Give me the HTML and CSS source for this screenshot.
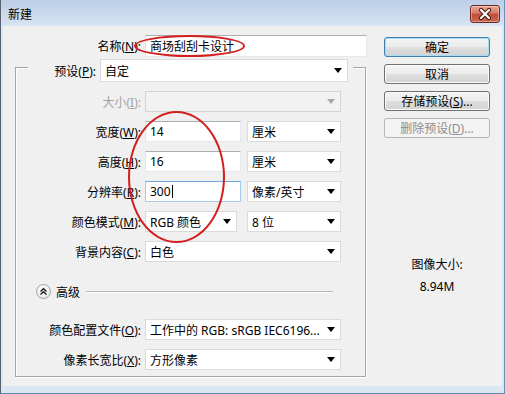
FILE: index.html
```html
<!DOCTYPE html>
<html lang="zh-CN">
<head>
  <meta charset="UTF-8" />
  <title>新建</title>
  <link rel="stylesheet" href="styles.css">
</head>
<body>

  <div class="window">
    <div class="titlebar">
      <span class="title">新建</span>
      <button class="close">
        <svg width="28" height="16" viewBox="0 0 28 16">
          <path d="M10 4 L18 12 M18 4 L10 12" stroke="#4a1810" stroke-width="4.2" stroke-linecap="round" fill="none"/>
          <path d="M10 4 L18 12 M18 4 L10 12" stroke="#ffffff" stroke-width="2.2" stroke-linecap="round" fill="none"/>
        </svg>
      </button>
    </div>

    <div class="client">
      <div class="main">
        <div class="name-row">
          <label class="lbl">名称(<u>N</u>):</label>
          <div class="field text">商场刮刮卡设计</div>
        </div>

        <div class="group">
          <div class="preset-row">
            <label class="lbl">预设(<u>P</u>):</label>
            <div class="field select">自定</div>
          </div>

          <div class="grow">
            <label class="lbl disabled">大小(<u>I</u>):</label>
            <div class="field select off"></div>
          </div>

          <div class="grow">
            <label class="lbl">宽度(<u>W</u>):</label>
            <div class="pair">
              <div class="field text num">14</div>
              <div class="field select unit">厘米</div>
            </div>
          </div>

          <div class="grow">
            <label class="lbl">高度(<u>H</u>):</label>
            <div class="pair">
              <div class="field text num">16</div>
              <div class="field select unit">厘米</div>
            </div>
          </div>

          <div class="grow">
            <label class="lbl">分辨率(<u>R</u>):</label>
            <div class="pair">
              <div class="field text num focus">300<span class="caret"></span></div>
              <div class="field select unit">像素/英寸</div>
            </div>
          </div>

          <div class="grow">
            <label class="lbl">颜色模式(<u>M</u>):</label>
            <div class="pair wide-gap">
              <div class="field select mode">RGB 颜色</div>
              <div class="field select unit">8 位</div>
            </div>
          </div>

          <div class="grow">
            <label class="lbl">背景内容(<u>C</u>):</label>
            <div class="field select">白色</div>
          </div>

          <div class="adv">
            <span class="expand">
              <svg width="15" height="15" viewBox="0 0 15 15">
                <path d="M4.5 7.5 L7.5 4.8 L10.5 7.5 M4.5 10.5 L7.5 7.8 L10.5 10.5" stroke="#1a1a1a" stroke-width="1.4" fill="none"/>
              </svg>
            </span>
            <span>高级</span>
            <span class="sep"></span>
          </div>

          <div class="grow profile">
            <label class="lbl">颜色配置文件(<u>O</u>):</label>
            <div class="field select">工作中的 RGB: sRGB IEC6196...</div>
          </div>

          <div class="grow">
            <label class="lbl">像素长宽比(<u>X</u>):</label>
            <div class="field select">方形像素</div>
          </div>
        </div>
      </div>

      <div class="side">
        <button class="btn default">确定</button>
        <button class="btn">取消</button>
        <button class="btn">存储预设(<u>S</u>)...</button>
        <button class="btn" disabled>删除预设(<u>D</u>)...</button>

        <div class="info">
          <p>图像大小:</p>
          <p class="size">8.94M</p>
        </div>
      </div>
    </div>

    <div class="mark mark-name"></div>
    <div class="mark mark-size"></div>
  </div>

</body>
</html>
```

FILE: styles.css
```css
body {
  margin: 0;
  font-family: "Noto Sans", "Noto Sans CJK SC", sans-serif;
  font-size: 12px;
  color: #000000;
}

.window {
  position: relative;
  width: 505px;
  height: 394px;
  box-sizing: border-box;
  background-color: #dce7f4;
  border-left: 1px solid #58626e;
  border-right: 1px solid #6d90b8;
  border-bottom: 1px solid #5f86b3;
  display: flex;
  flex-direction: column;
}

.titlebar {
  height: 26px;
  box-sizing: border-box;
  padding: 2px 4px 0 7px;
  display: flex;
  align-items: center;
  justify-content: space-between;
  background: linear-gradient(#bccfe7, #d7e4f3);
}

.close {
  width: 30px;
  height: 18px;
  padding: 0;
  border: 1px solid #6e2a20;
  border-radius: 3px;
  background: linear-gradient(#e9a898 0%, #d67a66 45%, #c04e3a 50%, #cc6450 100%);
  box-shadow: inset 0 0 0 1px rgba(255,255,255,0.35);
  display: flex;
  align-items: center;
  justify-content: center;
}

.client {
  margin: 0 2px;
  height: 360px;
  background-color: #f0f0f0;
  display: flex;
}

.main {
  width: 370px;
}

.lbl {
  text-align: right;
  white-space: nowrap;
}

.lbl.disabled {
  color: #a3a3a3;
}

.name-row {
  display: grid;
  grid-template-columns: 138px 222px;
  column-gap: 4px;
  align-items: center;
  height: 22px;
  margin-top: 9px;
}

.field {
  height: 100%;
  box-sizing: border-box;
  border: 1px solid #dadada;
  background-color: #ffffff;
  padding-left: 4px;
  display: flex;
  align-items: center;
  white-space: nowrap;
  overflow: hidden;
}

.field.text {
  border-color: #abadb3 #e3e9ef #e3e9ef #e2e3ea;
}

.field.focus {
  border-color: #6fa7dc #a7cbec #a7cbec #a7cbec;
}

.caret {
  display: inline-block;
  width: 1px;
  height: 13px;
  margin-left: 1px;
  background-color: #000000;
}

.field.select::after {
  content: "";
  margin-left: auto;
  margin-right: 5px;
  border-left: 4px solid transparent;
  border-right: 4px solid transparent;
  border-top: 5px solid #000000;
}

.field.select.off {
  background-color: #f2f2f2;
  border-color: #d4d4d4;
}

.field.select.off::after {
  border-top-color: #a8a8a8;
}

.group {
  width: 351px;
  box-sizing: border-box;
  margin: 10px 0 0 12px;
  padding-bottom: 6px;
  border: 1px solid #a5a5a5;
  box-shadow: inset 1px 1px 0 #ffffff, 1px 1px 0 #ffffff;
}

.preset-row {
  display: grid;
  grid-template-columns: 68px 248px;
  column-gap: 4px;
  align-items: center;
  height: 23px;
  margin: -9px 12px 0;
  background-color: #f0f0f0;
}

.grow {
  display: grid;
  grid-template-columns: 125px 196px;
  column-gap: 4px;
  align-items: center;
  height: 21px;
  margin-top: 9px;
}

.grow.profile {
  margin-top: 19px;
}

.pair {
  display: flex;
  gap: 6px;
  height: 100%;
}

.pair.wide-gap {
  gap: 10px;
}

.num {
  width: 96px;
}

.mode {
  width: 92px;
}

.unit {
  width: 94px;
}

.adv {
  display: flex;
  align-items: center;
  gap: 5px;
  height: 17px;
  margin: 21px 32px 0 0;
  padding-left: 20px;
}

.expand {
  width: 15px;
  height: 15px;
  box-sizing: border-box;
  border: 1px solid #a2a2a2;
  border-radius: 50%;
  background: radial-gradient(circle at 40% 35%, #ffffff, #e2e2e2);
  display: flex;
  align-items: center;
  justify-content: center;
}

.expand svg {
  margin: -1px;
}

.sep {
  flex: 1;
  margin-left: 1px;
  border-top: 1px solid #b8b8b8;
  border-bottom: 1px solid #ffffff;
}

.side {
  margin-left: 11px;
  padding-top: 11px;
  width: 106px;
  display: flex;
  flex-direction: column;
}

.btn {
  width: 106px;
  height: 20px;
  margin-bottom: 7px;
  padding: 0;
  font-family: inherit;
  font-size: 12px;
  color: #000000;
  border: 1px solid #707070;
  border-radius: 3px;
  background: linear-gradient(#f4f4f4 0%, #ececec 50%, #dfdfdf 51%, #d3d3d3 100%);
  box-shadow: inset 0 0 0 1px #fbfbfb;
}

.btn.default {
  border-color: #3c7fb1;
  box-shadow: inset 0 0 0 1px #a8dcf6;
}

.btn:disabled {
  color: #8d8d8d;
  border-color: #b5b8ba;
  background: #f4f4f4;
  box-shadow: none;
}

.info {
  margin-top: 112px;
  text-align: center;
}

.info p {
  margin: 0;
  line-height: 16px;
}

.info .size {
  margin-top: 6px;
}

.mark {
  position: absolute;
  box-sizing: border-box;
  border: 2px solid #d41f1f;
  border-radius: 50%;
}

.mark-name {
  left: 133px;
  top: 35px;
  width: 111px;
  height: 22px;
}

.mark-size {
  left: 127px;
  top: 111px;
  width: 97px;
  height: 132px;
}
```
